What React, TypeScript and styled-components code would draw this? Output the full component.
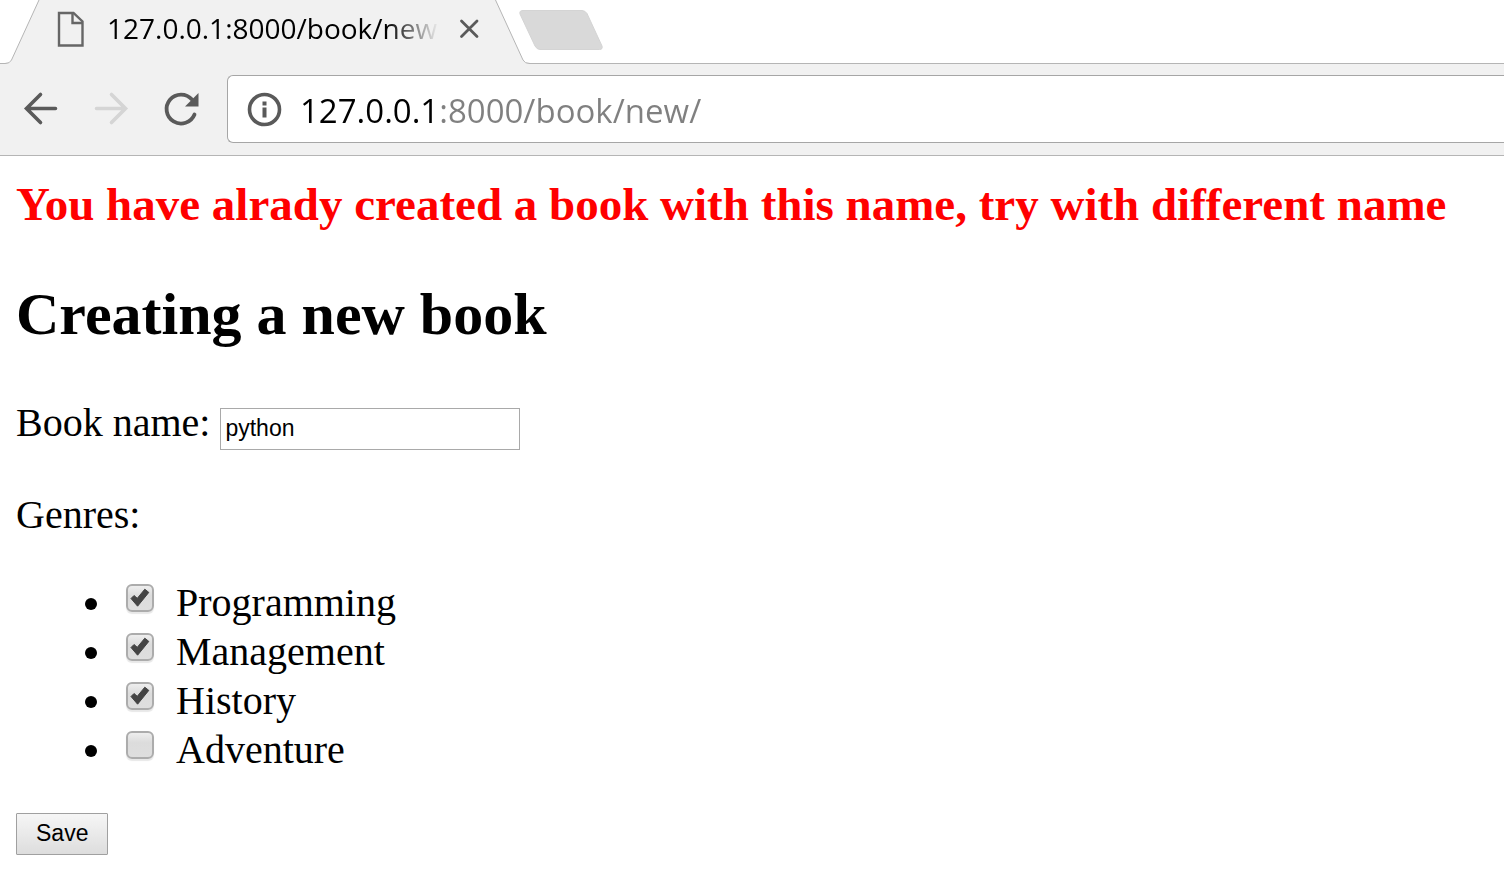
import React, { useState } from "react";
import styled, { createGlobalStyle } from "styled-components";

const GlobalStyle = createGlobalStyle`
  *, *::before, *::after { box-sizing: border-box; }
  body {
    margin: 0;
    background: #fff;
    color: #000;
    font: 40px/49px "Liberation Serif", "Times New Roman", serif;
  }
`;

const uiFont = `"Open Sans", "Segoe UI", sans-serif`;
const controlFont = `"Liberation Sans", Arial, sans-serif`;

const TabStrip = styled.div`
  display: flex;
  height: 64px;
  box-shadow: inset 0 -1px #b5b5b5;
`;

const Tab = styled.div`
  position: relative;
  flex: 0 0 auto;
  display: flex;
  align-items: center;
  width: 519px;
  height: 64px;
  padding: 0 38px 8px 56px;
`;

const TabShape = styled.svg`
  position: absolute;
  top: 0;
  left: 0;
`;

const PageIcon = styled.svg`
  position: relative;
  flex: none;
`;

const TabTitle = styled.span`
  position: relative;
  flex: 1;
  margin: 0 18px 0 21px;
  overflow: hidden;
  white-space: nowrap;
  font: 28px/40px ${uiFont};
  mask-image: linear-gradient(to right, #000 calc(100% - 52px), transparent);
`;

const IconButton = styled.button`
  position: relative;
  flex: none;
  display: flex;
  padding: 0;
  border: 0;
  background: none;
`;

const NewTab = styled(IconButton)`
  align-self: flex-start;
  margin-top: 9px;
`;

const Toolbar = styled.div`
  display: flex;
  align-items: center;
  height: 92px;
  padding: 0 0 1px 20px;
  border-bottom: 1px solid #b5b5b5;
  background: #f1f1f1;
`;

const NavButtons = styled.div`
  flex: none;
  display: flex;
  gap: 28px;
  margin-right: 25px;
`;

const AddressBar = styled.label`
  flex: 1;
  display: flex;
  align-items: center;
  gap: 16px;
  height: 68px;
  padding-left: 18px;
  border: 1px solid #a6a6a6;
  border-right: 0;
  border-radius: 6px 0 0 6px;
  background: #fff;
`;

/* The host part of the address is black, the rest grey. */
const AddressInput = styled.input`
  flex: 1;
  min-width: 0;
  height: 50px;
  padding: 2px 0 0;
  border: 0;
  outline: 0;
  font: 33px/48px ${uiFont};
  color: transparent;
  background: linear-gradient(to right, #000 139px, #808080 139px);
  background-clip: text;
  -webkit-background-clip: text;
`;

const Content = styled.main`
  padding: 20px 16px 24px;
`;

const ErrorMessage = styled.h3`
  margin: 0 0 48px;
  font-size: 47px;
  line-height: 56px;
  color: #f00;
`;

const Title = styled.h1`
  margin: 0 0 50px;
  font-size: 60px;
  line-height: 68px;
`;

const Field = styled.div`
  display: flex;
  align-items: flex-start;
  gap: 10px;
  margin-bottom: 40px;
`;

const TextInput = styled.input`
  width: 300px;
  height: 42px;
  margin-top: 10px;
  padding: 0 4px 1px;
  border: 1px solid #a9a9a9;
  font: 23px/38px ${controlFont};
  color: #000;
`;

const Genres = styled.fieldset`
  margin: 0 0 39px;
  padding: 0;
  border: 0;
`;

const Legend = styled.legend`
  margin-bottom: 39px;
  padding: 0;
`;

const GenreList = styled.ul`
  margin: 0;
  padding: 0 0 0 100px;
`;

const CheckBoxFrame = styled.span`
  position: relative;
  display: inline-block;
  width: 28px;
  height: 28px;
  margin: 0 22px 4px 10px;
  line-height: 0;
  vertical-align: baseline;
`;

const CheckBox = styled.input`
  appearance: none;
  display: block;
  width: 28px;
  height: 28px;
  margin: 0;
  border: 2px solid #acacac;
  border-radius: 6px;
  background: linear-gradient(#eee, #dcdcdc 40%, #dedede);
  box-shadow: 0 2px 1px #e8e8e8;

  & + svg { display: none; }
  &:checked + svg { display: block; }
`;

const CheckMark = styled.svg`
  position: absolute;
  top: 0;
  left: 0;
  pointer-events: none;
`;

const SaveButton = styled.button`
  display: block;
  height: 42px;
  padding: 0 19px 2px;
  border: 1px solid #a0a0a0;
  border-radius: 1px;
  background: linear-gradient(#f6f6f6, #dddddd);
  font: 23px/38px ${controlFont};
  color: #000;
`;

function Genre({ name, selected }: { name: string; selected: boolean }) {
  const [checked, setChecked] = useState(selected);
  return (
    <li>
      <label>
        <CheckBoxFrame>
          <CheckBox type="checkbox" checked={checked} onChange={() => setChecked(!checked)} />
          <CheckMark width="28" height="28" viewBox="0 0 28 28" aria-hidden="true">
            <path
              d="M5 14.5 8 11.5 11.3 14.3 18.8 5.2 22.8 8.4 11.6 22.2Z"
              fill="#444"
              stroke="#444"
              strokeWidth="1"
              strokeLinejoin="round"
            />
          </CheckMark>
        </CheckBoxFrame>
        {name}
      </label>
    </li>
  );
}

const genres = [
  { name: "Programming", selected: true },
  { name: "Management", selected: true },
  { name: "History", selected: true },
  { name: "Adventure", selected: false },
];

export default function App() {
  return (
    <>
      <GlobalStyle />
      <header>
        <TabStrip>
          <Tab>
            <TabShape width="530" height="64" viewBox="0 0 530 64" aria-hidden="true">
              <path d="M0 64V63.5H5Q10 63.5 11.5 60L39 0H495.5L523 60Q524.5 63.5 529 63.5V64Z" fill="#f1f1f1" />
              <path
                d="M0 63.5H5Q10 63.5 11.5 60L39 0M495.5 0L523 60Q524.5 63.5 530 63.5"
                fill="none"
                stroke="#b5b5b5"
              />
            </TabShape>
            <PageIcon width="30" height="38" viewBox="0 0 30 38" aria-hidden="true">
              <path d="M3 4H17.500L26.500 12.500V36.500H3Z" fill="none" stroke="#666" strokeWidth="2.400" />
              <path d="M16.500 4V14H26.500" fill="none" stroke="#666" strokeWidth="2.400" />
            </PageIcon>
            <TabTitle>127.0.0.1:8000/book/new</TabTitle>
            <IconButton type="button" aria-label="Close tab">
              <svg width="24" height="24" viewBox="0 0 24 24">
                <path d="M4.500 5 20 20.500M20 5 4.500 20.500" stroke="#5a5a5a" strokeWidth="2.800" strokeLinecap="round" />
              </svg>
            </IconButton>
          </Tab>
          <NewTab type="button" aria-label="New tab">
            <svg width="84" height="42" viewBox="0 0 84 42">
              <path
                d="M4 1.500H63Q66 1.500 68 4.500L83 37Q84 40.500 80.500 40.500H21Q18 40.500 16 37L1 5Q0 1.500 4 1.500Z"
                fill="#d9d9d9"
                stroke="#d4d4d4"
              />
            </svg>
          </NewTab>
        </TabStrip>
        <Toolbar>
          <NavButtons>
            <IconButton type="button" aria-label="Back">
              <svg width="42" height="42" viewBox="0 0 42 42" fill="none" stroke="#5a5a5a" strokeWidth="3.600" strokeLinecap="round">
                <path d="M35.500 20.500H7M20.500 6.500 6.500 20.500 20.500 34.500" />
              </svg>
            </IconButton>
            <IconButton type="button" aria-label="Forward" disabled>
              <svg width="42" height="42" viewBox="0 0 42 42" fill="none" stroke="#d5d5d5" strokeWidth="3.600" strokeLinecap="round">
                <path d="M6.500 20.500H35M21.500 6.500 35.500 20.500 21.500 34.500" />
              </svg>
            </IconButton>
            <IconButton type="button" aria-label="Reload">
              <svg width="42" height="42" viewBox="0 0 42 42">
                <path d="M34.500 26.500A14.500 14.500 0 1 1 32 11.500" fill="none" stroke="#5a5a5a" strokeWidth="3.800" strokeLinecap="round" />
                <path d="M38.500 5V18.500H25Z" fill="#5a5a5a" />
              </svg>
            </IconButton>
          </NavButtons>
          <AddressBar>
            <svg width="38" height="38" viewBox="0 0 38 38" role="img" aria-label="Address">
              <circle cx="18.500" cy="19.500" r="15" fill="none" stroke="#5a5a5a" strokeWidth="3.600" />
              <path d="M16.500 11.500h4v4h-4zM16.500 17.500h4v10h-4z" fill="#5a5a5a" />
            </svg>
            <AddressInput type="text" defaultValue="127.0.0.1:8000/book/new/" spellCheck={false} />
          </AddressBar>
        </Toolbar>
      </header>
      <Content>
        <ErrorMessage>You have alrady created a book with this name, try with different name</ErrorMessage>
        <Title>Creating a new book</Title>
        <form onSubmit={(event) => event.preventDefault()}>
          <Field>
            <label htmlFor="book-name">Book name:</label>
            <TextInput id="book-name" type="text" defaultValue="python" spellCheck={false} />
          </Field>
          <Genres>
            <Legend>Genres:</Legend>
            <GenreList>
              {genres.map((genre) => (
                <Genre key={genre.name} {...genre} />
              ))}
            </GenreList>
          </Genres>
          <SaveButton type="submit">Save</SaveButton>
        </form>
      </Content>
    </>
  );
}
